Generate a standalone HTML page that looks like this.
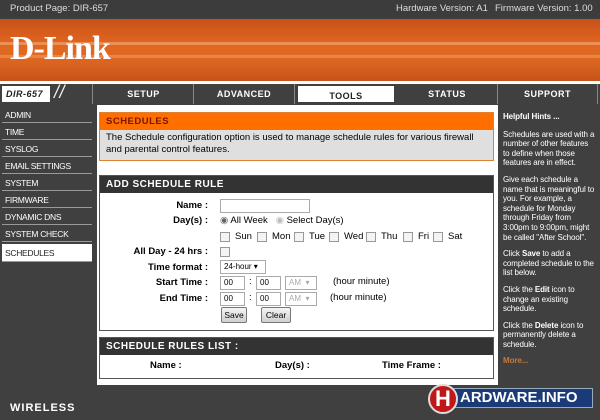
<!DOCTYPE html>
<html><head><meta charset="utf-8"><style>
*{margin:0;padding:0;box-sizing:border-box}
body{width:600px;height:420px;overflow:hidden;background:#404040;font-family:"Liberation Sans",Tahoma,sans-serif;font-size:9px;color:#000;position:relative}
.a{position:absolute}
.top{left:0;top:0;width:600px;height:18px;background:#3c3c3c;color:#ddd;font-size:9.5px;line-height:17px}
.ban{left:0;top:19px;width:600px;height:62px;background:linear-gradient(180deg,#c8511a 0%,#e0661f 40%,#e06a22 60%,#c8531a 100%)}
.stripe{left:0;width:600px;height:3px;background:rgba(255,220,190,.35)}
.logo{left:10px;top:30px;font-family:"Liberation Serif",serif;font-weight:bold;font-size:34px;color:#fff;letter-spacing:-1px}
.nav{top:84px;height:20px;background:#404040;color:#fff;font-weight:bold;font-size:9px;text-align:center;line-height:20px;letter-spacing:.5px;border-right:1px solid #888}
.side{left:0;top:105px;width:93px;height:280px;background:#404040}
.si{position:absolute;left:2px;width:90px;height:16px;color:#fff;font-size:8.5px;line-height:16px;padding-left:3px;border-bottom:1px solid #999;letter-spacing:-.3px}
.panel{left:97px;top:105px;width:401px;height:280px;background:#fff}
.hint{left:498px;top:105px;width:102px;height:280px;background:#404040;color:#fff;font-size:8px;line-height:9.6px;padding:7px 4px 0 5px;letter-spacing:-.1px}
.hint p{margin-bottom:7px}
.lbl{position:absolute;right:290px;font-weight:bold;font-size:9.5px;text-align:right;white-space:nowrap}
.in{position:absolute;border:1px solid #aaa;background:#fff;height:14px;font-size:8px;line-height:12px;padding-left:3px}
.cb{position:absolute;width:10px;height:10px;border:1px solid #999;background:#f4f4f4}
.t{position:absolute;font-size:9.5px;white-space:nowrap}
.btn{position:absolute;height:16px;border:1px solid #777;border-radius:2px;background:linear-gradient(#f4f4f4,#d0d0d0);font-size:8.5px;line-height:14px;text-align:center}
</style></head><body>
<div class="a top"><span style="position:absolute;left:10px">Product Page: DIR-657</span><span style="position:absolute;left:396px">Hardware Version: A1</span><span style="position:absolute;left:495px">Firmware Version: 1.00</span></div>
<div class="a ban"></div>
<div class="a stripe" style="top:42px"></div>
<div class="a stripe" style="top:55px;background:rgba(255,220,190,.25)"></div>
<div class="a logo">D-Link</div>
<div class="a" style="top:81px;left:0;width:600px;height:3px;background:#fff"></div>
<div class="a nav" style="left:0;width:93px;text-align:left"><span style="display:inline-block;background:#fff;color:#222;font-style:italic;width:48px;height:16px;line-height:16px;margin:2px 0 0 2px;padding-left:4px;font-size:9px">DIR-657</span><span style="position:absolute;left:54px;top:-2px;font-size:18px;font-style:italic;font-weight:normal;color:#eee">//</span></div>
<div class="a nav" style="left:94px;width:100px">SETUP</div>
<div class="a nav" style="left:194px;width:101px">ADVANCED</div>
<div class="a nav" style="left:296px;width:100px;background:#fff;color:#222;border:2px solid #404040">TOOLS</div>
<div class="a nav" style="left:397px;width:101px">STATUS</div>
<div class="a nav" style="left:498px;width:100px">SUPPORT</div>
<div class="a side">
<div class="si" style="top:2px">ADMIN</div>
<div class="si" style="top:19px">TIME</div>
<div class="si" style="top:36px">SYSLOG</div>
<div class="si" style="top:53px">EMAIL SETTINGS</div>
<div class="si" style="top:70px">SYSTEM</div>
<div class="si" style="top:87px">FIRMWARE</div>
<div class="si" style="top:104px">DYNAMIC DNS</div>
<div class="si" style="top:121px">SYSTEM CHECK</div>
<div class="si" style="top:139px;background:#fff;color:#222;height:18px;line-height:18px">SCHEDULES</div>
</div>
<div class="a panel">
<div class="a" style="left:2px;top:7px;width:395px;height:49px;border:1px solid #e08030;background:#dfdfdf">
<div style="height:17px;background:#ff6f00;color:#7a1500;font-weight:bold;font-size:9.5px;line-height:17px;padding-left:6px;letter-spacing:.5px">SCHEDULES</div>
<div style="padding:2px 6px;font-size:9.5px;line-height:12px">The Schedule configuration option is used to manage schedule rules for various firewall and parental control features.</div>
</div>
<div class="a" style="left:2px;top:70px;width:395px;height:156px;border:1px solid #555;background:#fff">
<div style="height:17px;background:#333;color:#fff;font-weight:bold;font-size:10px;line-height:17px;padding-left:6px;letter-spacing:.5px">ADD SCHEDULE RULE</div>
</div>
<div class="lbl" style="top:95px">Name :</div>
<div class="in" style="left:123px;top:94px;width:90px"></div>
<div class="lbl" style="top:110px">Day(s) :</div>
<div class="t" style="left:123px;top:110px"><span style="color:#666">◉</span> All Week &nbsp; <span style="color:#bbb">◉</span> Select Day(s)</div>
<div class="cb" style="left:123px;top:127px"></div><div class="t" style="left:138px;top:126px">Sun</div>
<div class="cb" style="left:160px;top:127px"></div><div class="t" style="left:175px;top:126px">Mon</div>
<div class="cb" style="left:197px;top:127px"></div><div class="t" style="left:212px;top:126px">Tue</div>
<div class="cb" style="left:232px;top:127px"></div><div class="t" style="left:247px;top:126px">Wed</div>
<div class="cb" style="left:269px;top:127px"></div><div class="t" style="left:284px;top:126px">Thu</div>
<div class="cb" style="left:306px;top:127px"></div><div class="t" style="left:321px;top:126px">Fri</div>
<div class="cb" style="left:336px;top:127px"></div><div class="t" style="left:351px;top:126px">Sat</div>
<div class="lbl" style="top:141px">All Day - 24 hrs :</div>
<div class="cb" style="left:123px;top:142px"></div>
<div class="lbl" style="top:157px">Time format :</div>
<div class="in" style="left:123px;top:155px;width:46px">24-hour ▾</div>
<div class="lbl" style="top:172px">Start Time :</div>
<div class="in" style="left:123px;top:171px;width:25px">00</div><div class="t" style="left:152px;top:171px">:</div>
<div class="in" style="left:159px;top:171px;width:25px">00</div>
<div class="in" style="left:188px;top:171px;width:32px;color:#aaa">AM &nbsp;▾</div>
<div class="t" style="left:236px;top:171px">(hour minute)</div>
<div class="lbl" style="top:188px">End Time :</div>
<div class="in" style="left:123px;top:187px;width:25px">00</div><div class="t" style="left:152px;top:187px">:</div>
<div class="in" style="left:159px;top:187px;width:25px">00</div>
<div class="in" style="left:188px;top:187px;width:32px;color:#aaa">AM &nbsp;▾</div>
<div class="t" style="left:233px;top:187px">(hour minute)</div>
<div class="btn" style="left:124px;top:202px;width:26px">Save</div>
<div class="btn" style="left:164px;top:202px;width:30px">Clear</div>
<div class="a" style="left:2px;top:232px;width:395px;height:42px;border:1px solid #555;background:#fff">
<div style="height:17px;background:#333;color:#fff;font-weight:bold;font-size:10px;line-height:17px;padding-left:6px;letter-spacing:.5px">SCHEDULE RULES LIST :</div>
<div class="t" style="left:50px;top:22px;font-weight:bold">Name :</div>
<div class="t" style="left:175px;top:22px;font-weight:bold">Day(s) :</div>
<div class="t" style="left:282px;top:22px;font-weight:bold">Time Frame :</div>
</div>
</div>
<div class="a hint">
<p style="font-weight:bold;margin-bottom:8px">Helpful Hints ...</p>
<p>Schedules are used with a number of other features to define when those features are in effect.</p>
<p>Give each schedule a name that is meaningful to you. For example, a schedule for Monday through Friday from 3:00pm to 9:00pm, might be called "After School".</p>
<p>Click <b>Save</b> to add a completed schedule to the list below.</p>
<p>Click the <b>Edit</b> icon to change an existing schedule.</p>
<p>Click the <b>Delete</b> icon to permanently delete a schedule.</p>
<p style="color:#c87a3a;font-weight:bold">More...</p>
</div>
<div class="a" style="left:10px;top:402px;color:#fff;font-weight:bold;font-size:11px;letter-spacing:1px">WIRELESS</div>
<div class="a" style="left:440px;top:388px;width:153px;height:20px;background:#1a3a78;border:1px solid #9ab"></div>
<div class="a" style="left:428px;top:384px;width:30px;height:30px;border-radius:50%;background:#c01818;border:2px solid #ddd;color:#fff;font-weight:bold;font-size:22px;line-height:26px;text-align:center">H</div>
<div class="a" style="left:460px;top:388px;color:#fff;font-weight:bold;font-size:15px;line-height:20px">ARDWARE.INFO</div>
</body></html>
